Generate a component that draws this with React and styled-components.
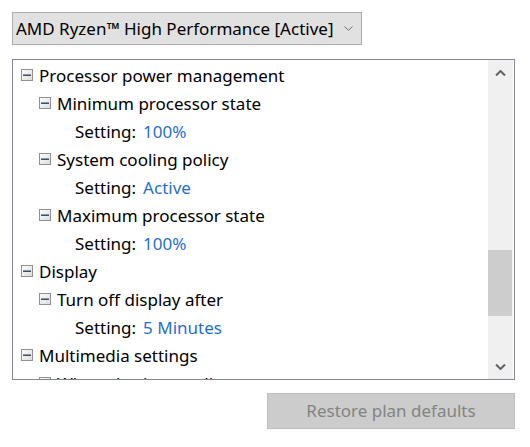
import React from 'react'
import styled, { createGlobalStyle } from 'styled-components'

const GlobalStyle = createGlobalStyle`
	body {
		margin: 0;
		background: #ffffff;
		font-family: 'Noto Sans', 'Open Sans', sans-serif;
		color: #000000;
	}
`

const Page = styled.div`
	width: 530px;
	height: 447px;
	box-sizing: border-box;
	padding: 12px 15px 0 12px;
	display: flex;
	flex-direction: column;
`

const Select = styled.div`
	width: 350px;
	height: 33px;
	box-sizing: border-box;
	background: #e1e1e1;
	border: 1px solid #adadad;
	display: flex;
	align-items: center;
	padding: 0 0 1px 3px;
	font-size: 17px;
	white-space: nowrap;
`

const Chevron = styled.svg`
	margin-left: 11px;
	flex-shrink: 0;
`

const TreeBox = styled.div`
	margin-top: 14px;
	width: 503px;
	height: 321px;
	box-sizing: border-box;
	border: 1px solid #828790;
	display: flex;
	overflow: hidden;
`

const TreeList = styled.div`
	flex: 1;
	padding-top: 1px;
	overflow: hidden;
`

const Row = styled.div`
	height: 28px;
	display: flex;
	align-items: center;
	padding-left: ${(p) => 8 + p.$level * 18}px;
	font-size: 17px;
	white-space: nowrap;
`

const Label = styled.span`
	margin-left: ${(p) => (p.$plain ? '18px' : '6px')};
`

const Value = styled.span`
	color: #1f6fd1;
	margin-left: 7px;
`

const ScrollBar = styled.div`
	width: 25px;
	margin-right: 1px;
	background: #f0f0f0;
	display: flex;
	flex-direction: column;
`

const ArrowButton = styled.div`
	height: 25px;
	display: flex;
	align-items: center;
	justify-content: center;
`

const Track = styled.div`
	flex: 1;
`

const Thumb = styled.div`
	height: 66px;
	margin: 0 1px 0 0;
	background: #cdcdcd;
`

const Footer = styled.div`
	margin-top: 13px;
	display: flex;
	justify-content: flex-end;
`

const Button = styled.button`
	width: 248px;
	height: 36px;
	background: #cccccc;
	border: 1px solid #bfbfbf;
	color: #838383;
	font-family: inherit;
	font-size: 17px;
	padding: 0 0 1px;
`

const ExpandBox = () => (
	<svg width='12' height='12' viewBox='0 0 12 12'>
		<defs>
			<linearGradient id='eb' x1='0' y1='0' x2='1' y2='1'>
				<stop offset='0' stopColor='#ffffff' />
				<stop offset='1' stopColor='#dcdcdc' />
			</linearGradient>
		</defs>
		<rect x='0.5' y='0.5' width='11' height='11' fill='url(#eb)' stroke='#919191' />
		<rect x='2' y='5.5' width='8' height='1.4' fill='#2f3d58' />
	</svg>
)

const rows = [
	{ level: 0, text: 'Processor power management' },
	{ level: 1, text: 'Minimum processor state' },
	{ level: 2, setting: '100%' },
	{ level: 1, text: 'System cooling policy' },
	{ level: 2, setting: 'Active' },
	{ level: 1, text: 'Maximum processor state' },
	{ level: 2, setting: '100%' },
	{ level: 0, text: 'Display' },
	{ level: 1, text: 'Turn off display after' },
	{ level: 2, setting: '5 Minutes' },
	{ level: 0, text: 'Multimedia settings' },
	{ level: 1, text: 'When sharing media' },
]

const App = () => {
	const thumbOffset = 165
	return (
		<>
			<GlobalStyle />
			<Page>
				<Select>
					AMD Ryzen™ High Performance [Active]
					<Chevron width='9' height='5' viewBox='0 0 9 5'>
						<path d='M0.5 0.5 L4.5 4.3 L8.5 0.5' fill='none' stroke='#6d6d6d' strokeWidth='1' />
					</Chevron>
				</Select>
				<TreeBox>
					<TreeList>
						{rows.map((r, i) => (
							<Row key={i} $level={r.level}>
								{r.setting ? (
									<Label $plain>
										Setting:<Value>{r.setting}</Value>
									</Label>
								) : (
									<>
										<ExpandBox />
										<Label>{r.text}</Label>
									</>
								)}
							</Row>
						))}
					</TreeList>
					<ScrollBar>
						<ArrowButton>
							<svg width='11' height='6' viewBox='0 0 11 6'>
								<path d='M1 5.5 L5.5 1 L10 5.5' fill='none' stroke='#606060' strokeWidth='2' />
							</svg>
						</ArrowButton>
						<Track>
							<Thumb style={{ marginTop: thumbOffset }} />
						</Track>
						<ArrowButton>
							<svg width='11' height='6' viewBox='0 0 11 6'>
								<path d='M1 0.5 L5.5 5 L10 0.5' fill='none' stroke='#606060' strokeWidth='2' />
							</svg>
						</ArrowButton>
					</ScrollBar>
				</TreeBox>
				<Footer>
					<Button disabled>Restore plan defaults</Button>
				</Footer>
			</Page>
		</>
	)
}

export default App
